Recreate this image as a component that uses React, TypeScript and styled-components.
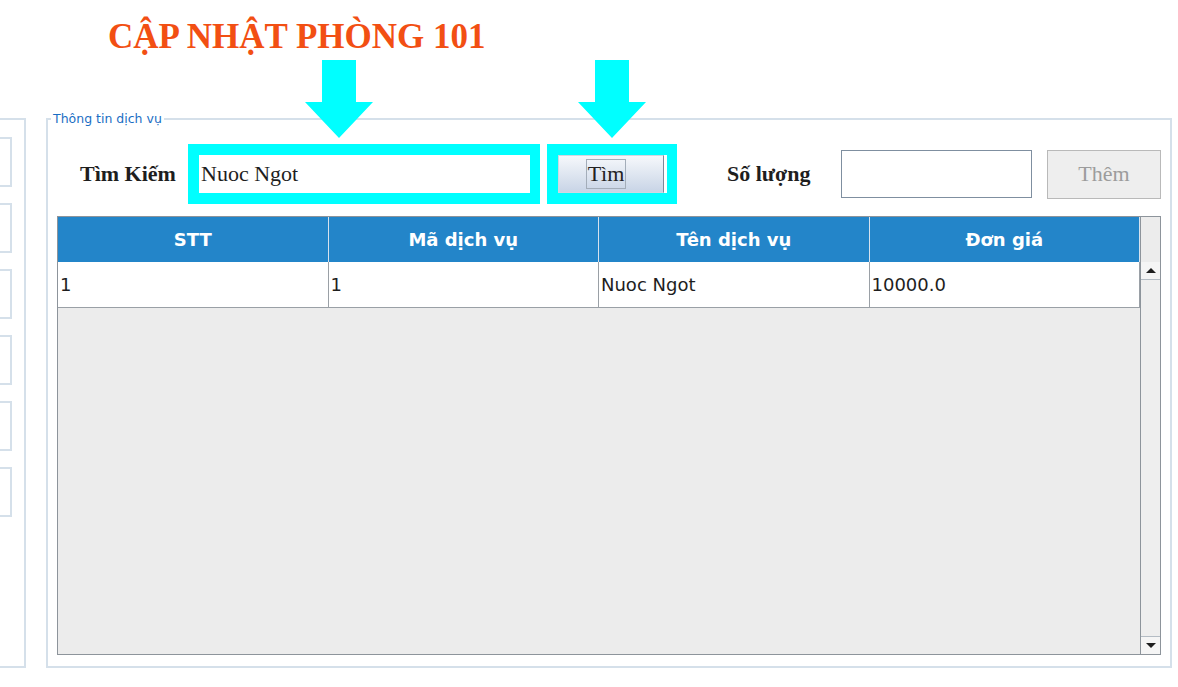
import styled, { createGlobalStyle } from "styled-components";

const GlobalStyle = createGlobalStyle`
  html, body {
    margin: 0;
    padding: 0;
    background: #ffffff;
    overflow: hidden;
  }
  body {
    font-family: "DejaVu Sans", sans-serif;
  }
`;

const Page = styled.div`
  width: 1178px;
  height: 687px;
  background: #ffffff;
`;

const Header = styled.header`
  box-sizing: border-box;
  height: 112px;
  padding: 17px 0 0 108px;
`;

const Title = styled.h1`
  margin: 0;
  font-family: "Liberation Serif", serif;
  font-size: 35px;
  line-height: 40px;
  font-weight: 700;
  color: #f24f13;
  white-space: nowrap;
`;

const Main = styled.main`
  display: flex;
  align-items: flex-start;
`;

const SidePanel = styled.aside`
  box-sizing: border-box;
  display: flex;
  flex-direction: column;
  gap: 16px;
  width: 26px;
  height: 550px;
  margin-top: 6px;
  padding-top: 17px;
  border: 2px solid #d5e0ea;
  border-left: none;
`;

const SideBox = styled.div`
  box-sizing: border-box;
  width: 12px;
  height: 50px;
  border: 2px solid #d5e0ea;
  border-left: none;
`;

const InfoFieldset = styled.fieldset`
  box-sizing: border-box;
  width: 1126px;
  height: 556px;
  min-width: 0;
  margin: 0 0 0 20px;
  padding: 0 9px 11px;
  border: 2px solid #d5e0ea;
`;

const Legend = styled.legend`
  margin-left: -6px;
  padding: 0 2px;
  font-family: "DejaVu Sans", sans-serif;
  font-size: 12.5px;
  line-height: 14px;
  color: #1a6ec4;
`;

const Controls = styled.div`
  display: flex;
  align-items: center;
  height: 60px;
  margin-top: 18px;
`;

const FieldLabel = styled.span<{ $offset: number; $width: number }>`
  flex: none;
  width: ${(p) => p.$width}px;
  margin-left: ${(p) => p.$offset}px;
  font-family: "Liberation Serif", serif;
  font-size: 22px;
  font-weight: 700;
  color: #1e1e1e;
  white-space: nowrap;
`;

const Highlight = styled.div<{ $width: number; $offset: number }>`
  position: relative;
  flex: none;
  box-sizing: border-box;
  display: flex;
  width: ${(p) => p.$width}px;
  height: 60px;
  margin-left: ${(p) => p.$offset}px;
  border-style: solid;
  border-color: #00ffff;
  border-width: 11px 10px 11px 11px;
  background: #ffffff;
`;

const Arrow = styled.svg<{ $left: number }>`
  position: absolute;
  left: ${(p) => p.$left}px;
  bottom: calc(100% + 17px);
  width: 68px;
  height: 78px;
`;

const SearchInput = styled.div`
  flex: 1;
  display: flex;
  align-items: center;
  padding-left: 2px;
  font-family: "Liberation Serif", serif;
  font-size: 22px;
  color: #1e1e1e;
`;

const FindButton = styled.div`
  box-sizing: border-box;
  display: flex;
  align-items: center;
  justify-content: center;
  width: calc(100% - 3px);
  height: 100%;
  padding-right: 10px;
  background: linear-gradient(#f6f8fb, #c8d4e6);
  border: 1px solid #d0d8e2;
  border-right: 1px solid #7d8898;
`;

const FocusText = styled.span`
  padding: 0 1px;
  border: 1px solid #a3adb9;
  font-family: "Liberation Serif", serif;
  font-size: 22px;
  line-height: 28px;
  color: #222222;
`;

const QuantityInput = styled.div`
  flex: none;
  box-sizing: border-box;
  width: 191px;
  height: 48px;
  border: 1px solid #7f8fa0;
  background: #ffffff;
`;

const AddButton = styled.div`
  flex: none;
  box-sizing: border-box;
  display: flex;
  align-items: center;
  justify-content: center;
  width: 114px;
  height: 49px;
  margin-left: 15px;
  background: #eeeeee;
  border: 1px solid #b9b9b9;
  font-family: "Liberation Serif", serif;
  font-size: 22px;
  color: #9c9c9c;
`;

const ScrollPane = styled.div`
  box-sizing: border-box;
  display: flex;
  height: 439px;
  margin-top: 12px;
  border: 1px solid #8d949b;
  background: #ececec;
`;

const TableArea = styled.div`
  flex: 1;
  display: flex;
  flex-direction: column;
`;

const Row = styled.div<{ $head?: boolean }>`
  display: grid;
  grid-template-columns: repeat(4, 1fr);
  height: ${(p) => (p.$head ? 45 : 46)}px;
  background: ${(p) => (p.$head ? "#2385c9" : "#ffffff")};
`;

const HeadCell = styled.div`
  display: flex;
  align-items: center;
  justify-content: center;
  border-right: 1px solid #d6e2ee;
  font-size: 18px;
  font-weight: 700;
  color: #ffffff;
`;

const Cell = styled.div`
  display: flex;
  align-items: center;
  padding-left: 2px;
  border-right: 1px solid #9aa0a6;
  border-bottom: 1px solid #9aa0a6;
  font-size: 18px;
  color: #1e1e1e;
`;

const Scrollbar = styled.div`
  flex: none;
  display: flex;
  flex-direction: column;
  width: 19px;
  border-left: 1px solid #8d949b;
  background: #eeeeee;
`;

const ScrollCorner = styled.div`
  height: 45px;
  background: #ececec;
`;

const ScrollTrack = styled.div`
  flex: 1;
  border-top: 1px solid #b4bcc4;
  border-bottom: 1px solid #b4bcc4;
`;

const ScrollButton = styled.div`
  display: flex;
  align-items: center;
  justify-content: center;
  height: 17px;
  background: #f5f5f5;
`;

const Triangle = styled.span<{ $up: boolean }>`
  width: 0;
  height: 0;
  border-left: 5px solid transparent;
  border-right: 5px solid transparent;
  ${(p) =>
    p.$up
      ? { borderBottom: "5px solid #1e1e1e" }
      : { borderTop: "5px solid #1e1e1e" }}
`;

const COLUMNS = ["STT", "Mã dịch vụ", "Tên dịch vụ", "Đơn giá"];
const ROWS = [["1", "1", "Nuoc Ngot", "10000.0"]];

function DownArrow({ left }: { left: number }) {
  return (
    <Arrow $left={left} viewBox="0 0 68 78">
      <path d="M17 0H51V42H68L34 78L0 42H17Z" fill="#00ffff" />
    </Arrow>
  );
}

export default function App() {
  return (
    <Page>
      <GlobalStyle />
      <Header>
        <Title>CẬP NHẬT PHÒNG 101</Title>
      </Header>
      <Main>
        <SidePanel>
          {Array.from({ length: 6 }, (_, i) => (
            <SideBox key={i} />
          ))}
        </SidePanel>
        <InfoFieldset>
          <Legend>Thông tin dịch vụ</Legend>
          <Controls>
            <FieldLabel $offset={23} $width={108}>
              Tìm Kiếm
            </FieldLabel>
            <Highlight $width={352} $offset={0}>
              <DownArrow left={106} />
              <SearchInput>Nuoc Ngot</SearchInput>
            </Highlight>
            <Highlight $width={130} $offset={7}>
              <DownArrow left={20} />
              <FindButton>
                <FocusText>Tìm</FocusText>
              </FindButton>
            </Highlight>
            <FieldLabel $offset={50} $width={114}>
              Số lượng
            </FieldLabel>
            <QuantityInput />
            <AddButton>Thêm</AddButton>
          </Controls>
          <ScrollPane>
            <TableArea>
              <Row $head>
                {COLUMNS.map((c) => (
                  <HeadCell key={c}>{c}</HeadCell>
                ))}
              </Row>
              {ROWS.map((r, i) => (
                <Row key={i}>
                  {r.map((v, j) => (
                    <Cell key={j}>{v}</Cell>
                  ))}
                </Row>
              ))}
            </TableArea>
            <Scrollbar>
              <ScrollCorner />
              <ScrollButton>
                <Triangle $up />
              </ScrollButton>
              <ScrollTrack />
              <ScrollButton>
                <Triangle $up={false} />
              </ScrollButton>
            </Scrollbar>
          </ScrollPane>
        </InfoFieldset>
      </Main>
    </Page>
  );
}
